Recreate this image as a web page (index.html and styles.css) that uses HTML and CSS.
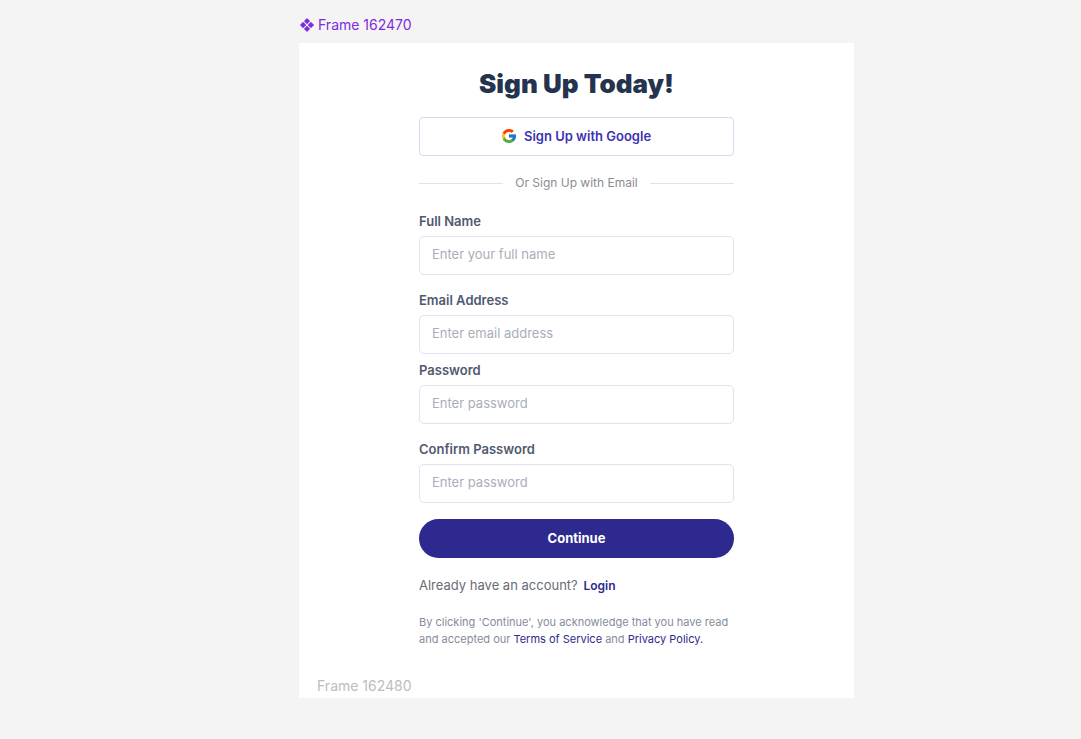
FILE: index.html
```html
<!DOCTYPE html>
<html lang="en">
<head>
<meta charset="utf-8">
<meta name="viewport" content="width=device-width, initial-scale=1">
<title>Sign Up</title>
<link rel="stylesheet" href="styles.css">
</head>
<body>
<main class="board">
  <div class="frame-label">
    <svg class="frame-icon" width="14" height="14" viewBox="0 0 14 14" fill="currentColor" stroke="currentColor" stroke-width="1.2" stroke-linejoin="round" aria-hidden="true">
      <path d="M7 .8l2.300 2.300L7 5.400 4.700 3.100zM7 8.600l2.300 2.300L7 13.200l-2.300-2.300zM3.100 4.700L5.400 7 3.100 9.300.8 7zM10.900 4.700L13.200 7l-2.300 2.300L8.600 7z"/>
    </svg>
    <span>Frame 162470</span>
  </div>
  <section class="frame">
    <form class="signup">
      <h1 class="title">Sign Up Today!</h1>
      <button class="google" type="button">
        <svg width="14" height="14" viewBox="4 4 40 40" aria-hidden="true">
          <path fill="#fbc02d" d="M43.600 20H24v8h11.300C33.700 32.700 29.200 36 24 36c-6.600 0-12-5.400-12-12s5.400-12 12-12c3.100 0 5.800 1.200 8 3l5.700-5.700C34 6 29.300 4 24 4 13 4 4 13 4 24s9 20 20 20 20-9 20-20c0-1.300-.1-2.700-.4-4z"/>
          <path fill="#ff3d00" d="M6.300 14.700l6.600 4.800C14.700 15.100 19 12 24 12c3.100 0 5.800 1.200 8 3l5.700-5.700C34 6 29.300 4 24 4 16.300 4 9.700 8.300 6.300 14.700z"/>
          <path fill="#4caf50" d="M24 44c5.200 0 9.900-2 13.400-5.200l-6.200-5.200C29.200 35.100 26.700 36 24 36c-5.200 0-9.600-3.300-11.300-8l-6.500 5C9.500 39.600 16.200 44 24 44z"/>
          <path fill="#1976d2" d="M43.600 20H24v8h11.300c-.8 2.200-2.200 4.200-4.100 5.600l6.200 5.200C37 39.200 44 34 44 24c0-1.300-.1-2.700-.4-4z"/>
        </svg>
        <span>Sign Up with Google</span>
      </button>
      <div class="divider"><span>Or Sign Up with Email</span></div>
      <div class="fields">
        <div class="field">
          <label for="name">Full Name</label>
          <input id="name" type="text" placeholder="Enter your full name">
        </div>
        <div class="field">
          <label for="email">Email Address</label>
          <input id="email" type="email" placeholder="Enter email address">
        </div>
        <div class="field field-close">
          <label for="password">Password</label>
          <input id="password" type="password" placeholder="Enter password">
        </div>
        <div class="field">
          <label for="confirm">Confirm Password</label>
          <input id="confirm" type="password" placeholder="Enter password">
        </div>
      </div>
      <button class="continue" type="submit">Continue</button>
      <p class="account">Already have an account? <a href="#login">Login</a></p>
      <p class="terms">By clicking 'Continue', you acknowledge that you have read and accepted our <a href="#terms">Terms of Service</a> and <a href="#privacy">Privacy Policy.</a></p>
    </form>
    <div class="inner-label">Frame 162480</div>
  </section>
</main>
</body>
</html>
```
FILE: styles.css
```css
* {
  box-sizing: border-box;
}

body {
  margin: 0;
  min-height: 100vh;
  background: #f4f4f4;
  font-family: "Inter", "Liberation Sans", sans-serif;
  font-size: 13px;
  line-height: 16px;
}

.board {
  display: grid;
  grid-template-columns: 299fr 555fr 227fr;
  row-gap: 8px;
  padding: 15px 0 40px;
}

.frame-label,
.frame {
  grid-column: 2;
}

.frame-label {
  display: flex;
  align-items: center;
  gap: 4px;
  padding-left: 1px;
  color: #7e2cdb;
  font-size: 14px;
  line-height: 20px;
}

.frame {
  background: #fff;
  padding: 24px 18px 2px;
}

.signup {
  display: flex;
  flex-direction: column;
  max-width: 315px;
  margin: 0 auto;
}

.title {
  margin: 0 0 16px;
  color: #24334e;
  font-size: 26px;
  font-weight: 900;
  line-height: 34px;
  text-align: center;
  white-space: nowrap;
}

.google,
.continue {
  display: flex;
  align-items: center;
  justify-content: center;
  gap: 8px;
  height: 39px;
  padding: 0 12px 2px;
  font: inherit;
  font-weight: 700;
  cursor: pointer;
}

.google {
  border: 1px solid #d9d7f3;
  border-radius: 4px;
  background: #fff;
  color: #3a32b0;
  font-weight: 600;
}

.divider {
  display: flex;
  align-items: center;
  gap: 12px;
  margin: 19px 0 22px;
  color: #8b8c91;
  font-size: 12px;
}

.divider::before,
.divider::after {
  content: "";
  flex: 1;
  height: 1px;
  background: #dfe2ec;
}

.field {
  display: flex;
  flex-direction: column;
  gap: 7px;
  margin-bottom: 17px;
}

.field:has(+ .field-close) {
  margin-bottom: 8px;
}

.field:last-child {
  margin-bottom: 16px;
}

.field label {
  color: #4f5a70;
  font-weight: 600;
}

.field input {
  width: 100%;
  height: 39px;
  padding: 0 12px 4px;
  border: 1px solid #dfe3f0;
  border-radius: 5px;
  background: #fff;
  color: #24334e;
  font: inherit;
}

.field input::placeholder {
  color: #a9aeb9;
  opacity: 1;
}

.continue {
  border: 0;
  border-radius: 20px;
  background: #2d298e;
  color: #fff;
}

.account {
  margin: 19px 0 20px;
  color: #686c77;
}

.account a {
  margin-left: 2px;
  color: #2d298e;
  font-size: 12px;
  font-weight: 600;
  text-decoration: none;
}

.terms {
  margin: 0;
  color: #858c9b;
  font-size: 11px;
  line-height: 17px;
}

.terms a {
  color: #2d298e;
  text-decoration: none;
}

.inner-label {
  margin-top: 28px;
  color: #bdbdbd;
  font-size: 14px;
  line-height: 20px;
}
```
